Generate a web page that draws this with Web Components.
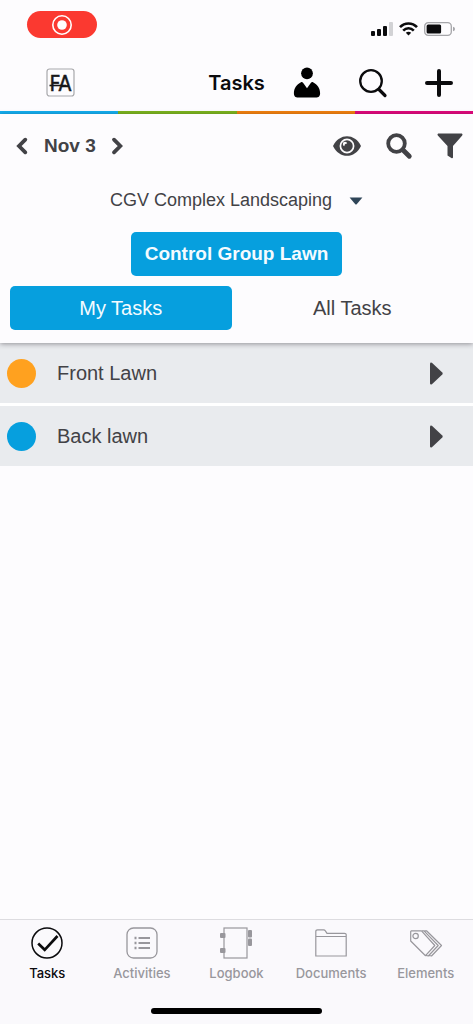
<!DOCTYPE html>
<html lang="en">
<head>
<meta charset="utf-8">
<meta name="viewport" content="width=device-width, initial-scale=1">
<title>Tasks</title>
<style>
html, body { margin: 0; }
body { background: #fdfcfe; color: #424246; font-family: "Liberation Sans", Arial, sans-serif; font-size: 20px; }
</style>
</head>
<body>
<task-app></task-app>
<script>
const reset = `
  * { box-sizing: border-box; }
  button, select { font: inherit; color: inherit; background: none; border: 0; margin: 0; padding: 0; cursor: pointer; }
  a { color: inherit; text-decoration: none; }
  svg { display: block; overflow: visible; }`;

function define(name, css, html) {
  const template = document.createElement('template');
  template.innerHTML = `<style>${reset}${css}</style>${html}`;
  customElements.define(name, class extends HTMLElement {
    constructor() {
      super();
      this.attachShadow({ mode: 'open' }).append(template.content.cloneNode(true));
    }
  });
}

define('status-bar', `
  :host { display: flex; justify-content: space-between; align-items: flex-start; height: 54px; padding: 11px 18px 0 27px; }
  .recording { display: grid; place-items: center; width: 70px; height: 27px; border-radius: 14px; background: #fb3930; }
  .signals { display: flex; gap: 6px; margin-top: 11px; }
`, `
  <div class="recording">
    <svg width="22" height="22" viewBox="0 0 22 22" role="img" aria-label="Recording"><circle cx="11" cy="11" r="9.2" fill="none" stroke="#fff" stroke-width="1.6"/><circle cx="11" cy="11" r="4.8" fill="#fff"/></svg>
  </div>
  <div class="signals">
    <svg width="22" height="14" viewBox="0 0 22 14"><g fill="#0b0b0d"><rect y="9" width="4" height="5" rx="1"/><rect x="6" y="7" width="4" height="7" rx="1"/><rect x="12" y="4" width="4" height="10" rx="1"/></g><rect x="18" width="4" height="14" rx="1" fill="#d2d2d5"/></svg>
    <svg width="19" height="14" viewBox="0 0 19 14" fill="none" stroke="#0b0b0d" stroke-width="2.6"><path d="M1 5.2C5.700 .2 13.300 .2 18 5.200"/><path d="M4.200 8.600c3-3.100 7.600-3.100 10.600 0"/><path d="M9.500 13.500l-2.700-2.700c1.600-1.300 3.800-1.300 5.400 0z" fill="#0b0b0d" stroke="none"/></svg>
    <svg width="31" height="14" viewBox="0 0 31 14"><rect x=".7" y=".7" width="26.600" height="12.600" rx="3.600" fill="none" stroke="#a5a5a9" stroke-width="1.300"/><rect x="2.600" y="2.500" width="14.500" height="9" rx="1.500" fill="#0b0b0d"/><path d="M29 4.800q2 .5 2 2.200t-2 2.200z" fill="#a5a5a9"/></svg>
  </div>`);

define('app-header', `
  :host { display: block; color: #0b0b0d; font-family: Inter, sans-serif; }
  header { display: grid; grid-template-columns: 1fr auto 1fr; align-items: center; height: 57px; }
  .logo { justify-self: start; margin-left: 46px; }
  h1 { margin: 0; font-size: 20px; line-height: 28px; font-weight: 600; }
  nav { display: flex; justify-content: space-between; align-items: center; padding: 0 20px 0 28px; }
  .stripe { display: grid; grid-template-columns: repeat(4, 1fr); height: 3px; }
  .stripe i:nth-child(1) { background: #12aef0; }
  .stripe i:nth-child(2) { background: #7bb51c; }
  .stripe i:nth-child(3) { background: #f4810c; }
  .stripe i:nth-child(4) { background: #e1087c; }
`, `
  <header>
    <a class="logo" href="#home" aria-label="FA home">
      <svg width="29" height="29" viewBox="0 0 29 29"><rect x="1" y="1" width="27" height="27" rx="2.500" fill="#fdfcfe" stroke="#a8a8ab" stroke-width="1.200"/><text x="14.500" y="22.500" text-anchor="middle" font-family="DejaVu Sans Condensed, DejaVu Sans, sans-serif" font-stretch="condensed" font-size="21" fill="#18181a" stroke="#18181a" stroke-width=".5">FA</text><path d="M3.500 17.500H20" stroke="#18181a" stroke-width="1.600"/></svg>
    </a>
    <h1>Tasks</h1>
    <nav>
      <button type="button" aria-label="Profile"><svg width="28" height="31" viewBox="0 0 28 31"><circle cx="14" cy="6.300" r="5.900"/><path d="M8 15.200c1.200-.7 2 .2 2.600 1.400l3.400 4.600 3.400-4.600c.6-1.200 1.400-2.100 2.600-1.400 4.500 2.200 7.100 6.500 7.100 10.800 0 3.300-1.200 4.500-4.500 4.500H5.400C2.100 30.500.9 29.300.9 26c0-4.300 2.600-8.600 7.100-10.800z"/></svg></button>
      <button type="button" aria-label="Search"><svg width="28" height="28" viewBox="0 0 28 28" fill="none" stroke="#0b0b0d"><circle cx="12" cy="12" r="10.800" stroke-width="2.300"/><path d="M20 20.500l6 6" stroke-width="3.200" stroke-linecap="round"/></svg></button>
      <button type="button" aria-label="Add"><svg width="28" height="28" viewBox="0 0 28 28"><path d="M14 2v24M2 14h24" stroke="#0b0b0d" stroke-width="4" stroke-linecap="round"/></svg></button>
    </nav>
  </header>
  <div class="stripe"><i></i><i></i><i></i><i></i></div>`);

define('date-toolbar', `
  :host { display: flex; justify-content: space-between; align-items: center; height: 63px; padding: 0 10px 0 16px; }
  .date { display: flex; align-items: center; gap: 16px; font-size: 19px; line-height: 24px; font-weight: 700; }
  .tools { display: flex; align-items: center; gap: 25px; }
`, `
  <div class="date">
    <button type="button" aria-label="Previous day"><svg width="12" height="16" viewBox="0 0 12 16"><path d="M9.300 1.700L3 8l6.300 6.300" fill="none" stroke="#424246" stroke-width="3.800" stroke-linecap="round"/></svg></button>
    <span>Nov 3</span>
    <button type="button" aria-label="Next day"><svg width="12" height="16" viewBox="0 0 12 16"><path d="M2 1.700L8.300 8 2 14.300" fill="none" stroke="#424246" stroke-width="3.800" stroke-linecap="round"/></svg></button>
  </div>
  <div class="tools">
    <button type="button" aria-label="Visibility"><svg width="28" height="20" viewBox="0 0 28 20"><path d="M0 10C6-3.100 22-3.100 28 10 22 23.100 6 23.100 0 10z" fill="#424246"/><circle cx="14" cy="10" r="6.600" fill="#424246" stroke="#fdfcfe" stroke-width="1.700"/><circle cx="12" cy="8" r="2.200" fill="#fdfcfe"/><circle cx="14.200" cy="10.300" r="2.800" fill="#424246"/></svg></button>
    <button type="button" aria-label="Search tasks"><svg width="26" height="26" viewBox="0 0 26 26" fill="none" stroke="#424246"><circle cx="10.500" cy="10.500" r="8.300" stroke-width="3.800"/><path d="M17 17l6.300 6.300" stroke-width="4.800" stroke-linecap="round"/></svg></button>
    <button type="button" aria-label="Filter"><svg width="26" height="26" viewBox="0 0 26 26"><path d="M1.200.5h23.600q1.300.4.400 1.900L16 13v11.500q-.4 1.200-1.600.6L10.500 22.500V13L.8 2.400Q-.1.900 1.200.5z" fill="#424246"/></svg></button>
  </div>`);

define('project-picker', `
  :host { display: flex; justify-content: center; align-items: center; height: 46px; }
  div { position: relative; }
  select { appearance: none; padding-right: 30px; height: 32px; font-size: 18px; outline-offset: 2px; }
  svg { position: absolute; right: 0; top: 13px; pointer-events: none; }
`, `
  <div>
    <select aria-label="Project"><option>CGV Complex Landscaping</option></select>
    <svg width="14" height="8" viewBox="0 0 14 8"><path d="M.6.500h12.800L7.700 7.300q-.7.600-1.400 0z" fill="#2f4558"/></svg>
  </div>`);

define('pill-button', `
  :host { display: block; }
  button { width: 100%; height: 44px; padding: 0 14px; border-radius: 5px; font-size: 20px; line-height: 24px; }
  :host([filled]) button { background: #069fde; color: #f4fbff; }
  :host([strong]) button { font-size: 19px; font-weight: 700; }
`, `<button type="button"><slot></slot></button>`);

define('task-filter', `
  :host { display: block; position: relative; background: #fdfcfe; box-shadow: 0 1px 5px rgba(40, 36, 44, .45); }
  .group { display: flex; justify-content: center; padding: 9px 0 10px; }
  .tabs { display: grid; grid-template-columns: 1fr 1fr; gap: 10px; padding: 0 10px 13px; }
`, `
  <date-toolbar></date-toolbar>
  <project-picker></project-picker>
  <div class="group"><pill-button filled strong>Control Group Lawn</pill-button></div>
  <div class="tabs"><pill-button filled>My Tasks</pill-button><pill-button>All Tasks</pill-button></div>`);

define('task-row', `
  :host { display: block; background: #e9ebee; }
  a { display: flex; align-items: center; height: 60px; padding: 0 30px 0 7px; }
  .dot { width: 29px; height: 29px; border-radius: 50%; background: var(--dot); }
  .name { flex: 1; margin-left: 21px; line-height: 24px; }
`, `
  <a href="#task"><span class="dot"></span><span class="name"><slot></slot></span>
  <svg width="13" height="23" viewBox="0 0 13 23"><path d="M0 1.500Q.4-.2 1.900.8L12.300 10.500q.9 1 0 2L1.900 22.200Q.4 23.200 0 21.500z" fill="#424246"/></svg></a>`);

define('tab-item', `
  :host { display: block; color: #98979c; }
  :host([active]) { color: #0b0b0d; }
  a { display: flex; flex-direction: column; align-items: center; gap: 4px; font-size: 13px; line-height: 16px; font-weight: 500; }
  .icon { display: grid; place-items: center; height: 36px; }
`, `<a href="#tab"><span class="icon"><slot name="icon"></slot></span><slot></slot></a>`);

define('tab-bar', `
  :host { display: block; background: #faf9fc; border-top: 1px solid #dddce0; font-family: Inter, sans-serif; }
  nav { display: grid; grid-template-columns: repeat(5, 1fr); padding-top: 5px; }
  .home { width: 36%; height: 6px; margin: 27px auto 10px; border-radius: 3px; background: #000; }
`, `
  <nav aria-label="Sections">
    <tab-item active>
      <svg slot="icon" width="32" height="32" viewBox="0 0 32 32" fill="none" stroke="#0b0b0d"><circle cx="16" cy="16" r="15" stroke-width="1.500"/><path d="M7.200 16.500l6.500 6.300L26.500 9" stroke-width="2.700"/></svg>Tasks
    </tab-item>
    <tab-item>
      <svg slot="icon" width="32" height="32" viewBox="0 0 32 32" fill="none" stroke="#98979c"><rect x="1" y="1" width="30" height="30" rx="6.500" stroke-width="1.300"/><path d="M12.500 11H24M12.500 16H24M12.500 21H24" stroke-width="2"/><path d="M8.500 11h2M8.500 16h2M8.500 21h2" stroke-width="2.300"/></svg>Activities
    </tab-item>
    <tab-item>
      <svg slot="icon" width="32" height="32" viewBox="0 0 32 32"><rect x="4" y="1" width="23" height="30" fill="none" stroke="#98979c" stroke-width="1.200"/><g fill="#98979c"><rect y="6" width="5.500" height="5" rx="1"/><rect y="21" width="5.500" height="5" rx="1"/><rect x="28" y="3" width="4" height="7.500" rx="1"/><rect x="28" y="11.500" width="4" height="7.500" rx="1"/></g></svg>Logbook
    </tab-item>
    <tab-item>
      <svg slot="icon" width="32" height="28" viewBox="0 0 32 28" fill="none" stroke="#98979c" stroke-width="1.200"><path d="M.8 27V2.500Q.8.800 2.500.8h6.200q1 0 1.500.8l1.800 2.700h17.500q1.700 0 1.700 1.200V27zM.8 7.500h30.400"/></svg>Documents
    </tab-item>
    <tab-item>
      <svg slot="icon" width="32" height="27" viewBox="0 0 32 27" fill="none" stroke="#98979c" stroke-width="1.200" stroke-linejoin="round"><path d="M.7 1.500V11L15.500 25.700 24.800 15.500 11.500.8H1.500z"/><circle cx="5.600" cy="6" r="2.700"/><path d="M12 .8h2L28.200 15.500 18.300 26l-2.300-.6M14.500.8h2L31.500 15.500 21.500 26l-2.300-.6"/></svg>Elements
    </tab-item>
  </nav>
  <div class="home"></div>`);

define('task-app', `
  :host { display: flex; flex-direction: column; min-height: 100vh; }
  main { flex: 1; }
  .list { display: grid; gap: 3px; background: #fff; }
  .orange { --dot: #ffa11f; }
  .blue { --dot: #069fde; }
`, `
  <status-bar></status-bar>
  <app-header></app-header>
  <main>
    <task-filter></task-filter>
    <div class="list"><task-row class="orange">Front Lawn</task-row><task-row class="blue">Back lawn</task-row></div>
  </main>
  <tab-bar></tab-bar>`);
</script>
</body>
</html>
